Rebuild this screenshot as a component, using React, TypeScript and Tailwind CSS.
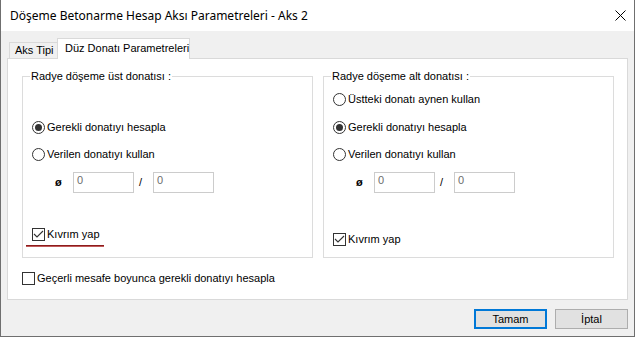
const font = "font-['Liberation_Sans',Arial,sans-serif]";

function Radio({ checked, label }: { checked?: boolean; label: string }) {
  return (
    <div className="flex h-4 items-center">
      <span className="flex h-[13px] w-[13px] items-center justify-center rounded-full border border-[#333333] bg-white">
        {checked && <span className="h-[7px] w-[7px] rounded-full bg-[#333333]" />}
      </span>
      <span className="ml-[2px] whitespace-nowrap text-[11px] leading-4 text-black">{label}</span>
    </div>
  );
}

function Check({ checked, label }: { checked?: boolean; label: string }) {
  return (
    <div className="flex h-4 items-center">
      <span className="flex h-[13px] w-[13px] items-center justify-center border border-[#333333] bg-white">
        {checked && (
          <svg width="11" height="11" viewBox="0 0 11 11">
            <polyline points="1,5 4,8 10,2" fill="none" stroke="#333333" strokeWidth="1.1" />
          </svg>
        )}
      </span>
      <span className="ml-[2px] whitespace-nowrap text-[11px] leading-4 text-black">{label}</span>
    </div>
  );
}

function Box() {
  return (
    <div className="h-[21px] w-[61px] border border-[#cccccc] bg-white pl-[3px] text-[11px] leading-[15px] text-[#6d6d6d]">
      0
    </div>
  );
}

function BarInputs() {
  return (
    <div className="mt-[10px] flex h-[21px] items-center pl-[23px]">
      <span className="w-[18px] text-[11px] font-bold leading-[21px]">ø</span>
      <Box />
      <span className="w-[19px] pl-[5px] text-[11px] leading-[21px]">/</span>
      <Box />
    </div>
  );
}

export default function App() {
  return (
    <div className={`h-[338px] w-[636px] bg-white ${font}`}>
      <div className="flex h-[337px] w-[635px] flex-col border-x border-b border-[#6f6f6f] bg-[#f0f0f0]">
        {/* title bar */}
        <div className="flex h-[31px] shrink-0 items-center justify-between bg-white pl-[9px] pr-[8px]">
          <span className="font-['Noto_Sans',sans-serif] text-[12px] leading-4 text-black">
            Döşeme Betonarme Hesap Aksı Parametreleri - Aks 2
          </span>
          <svg width="11" height="11" viewBox="0 0 11 11">
            <path d="M0.5 0.5 L10.5 10.5 M10.5 0.5 L0.5 10.5" stroke="#000" strokeWidth="1" />
          </svg>
        </div>

        <div className="flex flex-col px-[6px] pt-[7px]">
          {/* tabs */}
          <div className="ml-[2px] flex h-[21px] items-end">
            <div className="mb-[1px] h-[16px] w-[48px] whitespace-nowrap border-l border-t border-[#d9d9d9] pl-[5px] text-[11px] leading-[15px]">
              Aks Tipi
            </div>
            <div className="relative z-10 h-[21px] w-[133px] whitespace-nowrap border-x border-t border-[#d9d9d9] bg-white pl-[7px] text-[11px] leading-[18px]">
              Düz Donatı Parametreleri
            </div>
          </div>

          {/* tab page */}
          <div className="-mt-px h-[242px] w-[621px] border border-[#d9d9d9] bg-white">
            <div className="ml-[14px] mt-[10px] flex gap-[10px]">
              <fieldset className="m-0 flex h-[189px] w-[291px] flex-col border border-[#dcdcdc] px-[9px] py-0">
                <legend className="-ml-[2px] px-[1px] text-[11px] leading-[14px]">Radye döşeme üst donatısı :</legend>
                <div className="mt-[36px]">
                  <Radio checked label="Gerekli donatıyı hesapla" />
                </div>
                <div className="mt-[11px]">
                  <Radio label="Verilen donatıyı kullan" />
                </div>
                <BarInputs />
                <div className="mt-[33px]">
                  <Check checked label="Kıvrım yap" />
                </div>
                <div className="-ml-[6px] mt-[3px] h-[2px] w-[78px] border-b border-t border-b-[#c05a5a] border-t-[#8c1c1c]" />
              </fieldset>

              <fieldset className="m-0 flex h-[189px] w-[291px] flex-col border border-[#dcdcdc] px-[9px] py-0">
                <legend className="-ml-[2px] px-[1px] text-[11px] leading-[14px]">Radye döşeme alt donatısı :</legend>
                <div className="mt-[8px]">
                  <Radio label="Üstteki donatı aynen kullan" />
                </div>
                <div className="mt-[12px]">
                  <Radio checked label="Gerekli donatıyı hesapla" />
                </div>
                <div className="mt-[11px]">
                  <Radio label="Verilen donatıyı kullan" />
                </div>
                <BarInputs />
                <div className="mt-[38px]">
                  <Check checked label="Kıvrım yap" />
                </div>
              </fieldset>
            </div>

            <div className="ml-[14px] mt-[12px]">
              <Check label="Geçerli mesafe boyunca gerekli donatıyı hesapla" />
            </div>
          </div>

          {/* buttons */}
          <div className="mt-[9px] flex justify-end gap-[8px]">
            <button className="h-[20px] w-[73px] border-2 border-[#0078d7] bg-[#e1e1e1] text-[11px] leading-[14px] text-black">
              Tamam
            </button>
            <button className="h-[20px] w-[73px] border border-[#adadad] bg-[#e1e1e1] text-[11px] leading-[16px] text-black">
              İptal
            </button>
          </div>
        </div>
      </div>
    </div>
  );
}
